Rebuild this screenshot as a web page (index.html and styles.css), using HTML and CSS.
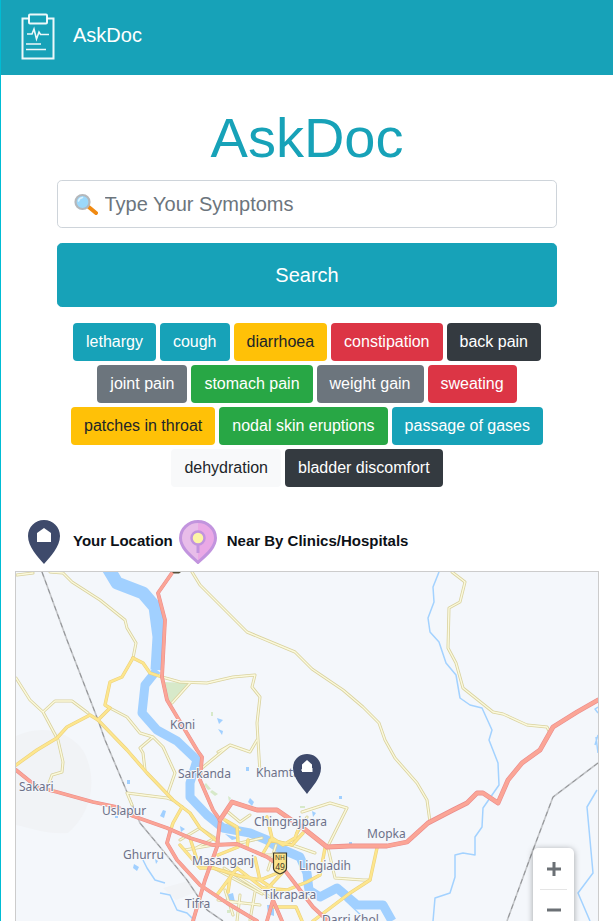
FILE: index.html
```html
<!DOCTYPE html>
<html lang="en">
<head>
<meta charset="utf-8">
<title>AskDoc</title>
<link rel="stylesheet" href="styles.css">
</head>
<body>
<div class="page">
  <nav class="navbar">
    <svg class="brand-icon" viewBox="0 0 34 48" width="34" height="48" aria-hidden="true">
      <path class="brand-stroke" d="M8 5.500H1.500V45.500H32.500V5.500H26"/>
      <rect class="brand-stroke" x="8" y="1.500" width="18" height="9" rx="1"/>
      <path class="brand-stroke thin" d="M6 21H11L13 16L15.500 26L18 19L19.500 21.500H28"/>
      <path class="brand-stroke thin" d="M5 31H20M5 36.500H25"/>
    </svg>
    <span class="brand-name">AskDoc</span>
  </nav>

  <main class="content">
    <h1 class="title">AskDoc</h1>
    <form class="search">
      <div class="search-field">
        <input class="search-input" type="text" placeholder="Type Your Symptoms">
        <svg class="search-emoji" viewBox="0 0 24 24" width="24" height="24" aria-hidden="true">
          <path class="emoji-handle" d="M13.500 14L22 21"/>
          <circle class="emoji-glass" cx="8.500" cy="10" r="7"/>
          <path class="emoji-shine" d="M4.500 9C5 7 6.500 5.800 8.500 5.500"/>
        </svg>
      </div>
      <button class="search-button" type="button">Search</button>
    </form>
    <div class="chips">
      <a class="chip info">lethargy</a>
      <a class="chip info">cough</a>
      <a class="chip warning">diarrhoea</a>
      <a class="chip danger">constipation</a>
      <a class="chip dark">back pain</a>
      <a class="chip secondary">joint pain</a>
      <a class="chip success">stomach pain</a>
      <a class="chip secondary">weight gain</a>
      <a class="chip danger">sweating</a>
      <a class="chip warning">patches in throat</a>
      <a class="chip success">nodal skin eruptions</a>
      <a class="chip info">passage of gases</a>
      <a class="chip light">dehydration</a>
      <a class="chip dark">bladder discomfort</a>
    </div>
  </main>

  <section class="legend">
    <svg class="legend-pin" viewBox="0 0 32 44" width="32" height="44" aria-hidden="true">
      <path class="pin-dark" d="M16 0C7 0 0 7 0 16C0 27 10 37 16 44C22 37 32 27 32 16C32 7 25 0 16 0Z"/>
      <path class="pin-white" d="M9 22V13L16 8L23 13V22Z"/>
    </svg>
    <span class="legend-label first">Your Location</span>
    <svg class="legend-pin" viewBox="0 0 38 44" width="38" height="44" aria-hidden="true">
      <path class="pin-pink-light" d="M19 1.500C9.500 1.500 1.500 9 1.500 18C1.500 28 12 36 19 42.500Z"/>
      <path class="pin-pink" d="M19 1.500C28.500 1.500 36.500 9 36.500 18C36.500 28 26 36 19 42.500Z"/>
      <path class="pin-outline" d="M19 1.500C9.500 1.500 1.500 9 1.500 18C1.500 28 12 36 19 42.500C26 36 36.500 28 36.500 18C36.500 9 28.500 1.500 19 1.500Z"/>
      <path class="pin-stem" d="M19 24V33"/>
      <circle class="pin-bulb" cx="19" cy="18" r="6.500"/>
    </svg>
    <span class="legend-label">Near By Clinics/Hospitals</span>
  </section>

  <section class="map">
    <svg class="map-canvas" viewBox="16 572 582 400" width="582" height="400" aria-hidden="true">
      <defs>
        <path id="m1" d="M17 575L33 573M50 572L63 573L72 582L100 600L125 620L127 628L136 643L133 658"/>
        <path id="m2" d="M192 572L200 585L227 612L247 632L295 652L312 669L343 690L363 707L379 723L385 740L395 758L417 783L427 800L430 822"/>
        <path id="m3" d="M452 572L465 582L460 602L449 608L448 648L456 663L463 688L493 712L503 714L527 725L547 727L550 733"/>
        <path id="m4" d="M162 677L180 682L207 683L233 677L255 675L252 687L260 697L257 723L258 740L260 773M190 683L172 703"/>
        <path id="m5" d="M16 678L30 700L43 712L55 701L72 701L88 713M43 712L58 740L63 762L62 772L52 775L49 783"/>
        <path id="m6" d="M108 707L127 717L140 733L153 737L163 747L175 773L168 793M153 737L140 748L143 753L145 770"/>
        <path id="m7" d="M202 768L230 745L250 752L257 740M127 793L167 798L173 800M127 793L132 805M230 745L218 752"/>
        <path id="m8" d="M180 840L200 828L215 838L196 848M185 850L213 845M228 812L240 822L250 815M227 822L240 830M210 866L262 894M224 868L270 897M218 900L260 905M240 895L237 921M272 855L262 855M225 890L233 915M255 892L250 920M315 853L292 845L270 840M302 812L330 803L347 808L327 848M307 817L297 833M328 848L335 878L363 880L370 880M240 843L262 838M276 845L268 870"/>
        <path id="y1" d="M133 658L122 677L110 682L105 705L110 708L98 720L127 750L147 773L173 800L190 813L200 828L218 842"/>
        <path id="y2" d="M98 720L90 715L67 727L57 738L37 750L16 765M133 658L143 663L150 673L162 677M182 807L173 823L170 832"/>
        <path id="y3" d="M213 868L240 876L260 880L280 872M237 868L217 895M237 868L263 888M230 878L228 892M218 855L238 847M248 840L247 848M225 820L237 827L238 843M255 858L260 880M267 817L272 838L262 855M272 838L283 845L295 838L298 830M270 840L292 845L303 833M260 880L275 890M190 838L197 860M180 845L200 868L213 868"/>
        <path id="y4" d="M325 848L320 875L307 882L287 890M377 848L370 880L350 893L313 921M282 873L268 888M263 888L287 890M274 907L296 907L302 921"/>
        <path id="t1" d="M172 573L158 593L165 620L162 677L167 700L197 750L202 757L200 780L213 810L220 820L217 847L205 880L193 921"/>
        <path id="t2" d="M220 820L232 802L257 810L277 810L303 828L327 847L350 846L387 846L407 842L428 823L453 810L467 803L477 793L483 793L498 803L508 780L522 763L540 750L553 727L577 712L598 700"/>
        <path id="t3" d="M16 770L37 787L57 792L93 802L117 807L133 816L167 828L190 838L213 845L237 844L267 857L283 868L300 890L313 907L328 921"/>
        <path id="t4" d="M170 832L167 843L177 860L200 885L227 903L257 921M273 900L267 921M273 900L282 921"/>
      </defs>

      <rect class="map-bg" x="16" y="572" width="582" height="400"/>
      <path class="land" d="M16 736C40 724 70 730 84 752C98 780 92 812 68 833C50 835 30 828 16 825Z"/>
      <path class="land" d="M163 888L188 881L196 892L176 900Z"/>
      <path class="park" d="M163 682L190 683L170 703L165 697Z"/>
      <path class="park" d="M211 712H213V716H211ZM206 783L211 789L208 790L204 785ZM212 790L218 794L215 796L210 792ZM300 806H305V808H300ZM228 796L231 798L229 802ZM227 910H230V913H227Z"/>

      <path class="stream" d="M439 572L433 587L434 602L428 618L430 632L439 642L446 663L456 675L460 698L470 705L482 708L492 730L489 740L498 763L499 785L483 808L482 827L475 837L475 855L463 853L455 855L455 877L450 893L435 898L433 921"/>
      <path class="stream" d="M596 737L598 753M597 790L587 807L593 873L578 893L590 921M598 707L595 709L598 713M598 735L595 745M143 860L147 868L155 880L165 883M160 893L170 895L177 910L187 913L195 921M345 900L367 921"/>
      <path class="river wide" d="M108 568L117 583L143 593L155 607L159 637L157 670"/>
      <path class="river" d="M157 670L145 685L142 713L157 730L177 741L197 760L190 783L190 797L207 815L223 828L250 833L267 840L277 847L300 857L307 873L309 890L320 897L337 888L357 905L383 905L392 921"/>
      <path class="pond" d="M217 718L223 720L219 724ZM218 729L223 731L222 735ZM127 780H130V784H127ZM163 810L166 811L164 818L160 816ZM180 826L185 829L181 832ZM250 798L254 802L252 806L248 802ZM246 767H249V771H246ZM134 864L139 867L137 871L133 868ZM155 859L158 861L156 864ZM115 816H118V818H115ZM339 796H342V799H339ZM349 842H352V844H349ZM312 811L316 813L313 817ZM226 895L233 893L235 902L227 903ZM267 905H274V916L268 914ZM225 834L240 838L232 840ZM303 880L310 882L309 892L304 888Z"/>

      <g class="rail-base"><path d="M42 572L67 640L98 720L105 740L127 792L140 823L160 847L187 880L207 910L223 921"/><path d="M598 763L553 797L533 850L507 921"/></g>
      <g class="rail-dash"><path d="M42 572L67 640L98 720L105 740L127 792L140 823L160 847L187 880L207 910L223 921"/><path d="M598 763L553 797L533 850L507 921"/></g>

      <g class="casing minor">
        <use href="#m1"/><use href="#m2"/><use href="#m3"/><use href="#m4"/><use href="#m5"/><use href="#m6"/><use href="#m7"/><use href="#m8"/>
      </g>
      <g class="fill minor">
        <use href="#m1"/><use href="#m2"/><use href="#m3"/><use href="#m4"/><use href="#m5"/><use href="#m6"/><use href="#m7"/><use href="#m8"/>
      </g>
      <g class="casing major">
        <use href="#y1"/><use href="#y2"/><use href="#y3"/><use href="#y4"/>
      </g>
      <g class="fill major">
        <use href="#y1"/><use href="#y2"/><use href="#y3"/><use href="#y4"/>
      </g>
      <g class="casing trunk-thin">
        <use href="#t1"/><use href="#t3"/><use href="#t4"/>
      </g>
      <g class="fill trunk-thin">
        <use href="#t1"/><use href="#t3"/><use href="#t4"/>
      </g>
      <g class="casing trunk">
        <use href="#t2"/>
      </g>
      <g class="fill trunk">
        <use href="#t2"/>
      </g>

      <path class="top-tip" d="M172 572H181L179 573.500H174Z"/>

      <g class="map-labels">
        <text x="170" y="729">Koni</text>
        <text x="178" y="778">Sarkanda</text>
        <text x="256" y="777">Khamta</text>
        <text x="19" y="791">Sakari</text>
        <text x="102" y="815">Uslapur</text>
        <text x="123" y="859">Ghurru</text>
        <text x="192" y="865">Masanganj</text>
        <text x="185" y="908">Tifra</text>
        <text x="263" y="899">Tikrapara</text>
        <text x="254" y="826">Chingrajpara</text>
        <text x="299" y="870">Lingiadih</text>
        <text x="367" y="838">Mopka</text>
        <text x="322" y="924">Darri Khol</text>
      </g>

      <g class="shield-group">
        <path class="shield" d="M273.500 853H286.500V868C286.500 871 283 873 280 874C277 873 273.500 871 273.500 868Z"/>
        <text class="shield-top" x="280" y="860" text-anchor="middle">NH</text>
        <text class="shield-num" x="280" y="870" text-anchor="middle">49</text>
      </g>

      <path class="pin-dark" d="M307 754C299 754 293 760 293 768C293 778 302 787 307 794C312 787 321 778 321 768C321 760 315 754 307 754Z"/>
      <path class="pin-white" d="M302 772V764.500L307 760L312 764.500V772Z"/>
      <path class="pin-detail" d="M301 770H306M309 768V772M312 768V772"/>
    </svg>
    <div class="zoom-control">
      <button class="zoom-button" type="button" aria-label="Zoom in">
        <svg viewBox="0 0 16 16" width="16" height="16"><path d="M8 1V15M1 8H15"/></svg>
      </button>
      <button class="zoom-button" type="button" aria-label="Zoom out">
        <svg viewBox="0 0 16 16" width="16" height="16"><path d="M1 8H15"/></svg>
      </button>
    </div>
  </section>
</div>
</body>
</html>
```
FILE: styles.css
```css
* { box-sizing: border-box; }
html, body { margin: 0; padding: 0; background: #fff; }
body {
  font-family: "Liberation Sans", Arial, sans-serif;
  font-size: 16px;
  line-height: 1.5;
  color: #212529;
}
.page {
  height: 100vh;
  overflow: hidden;
  border-left: 1px solid #00bcd4;
}
.navbar {
  height: 75px;
  background: #17a2b8;
  display: flex;
  align-items: center;
  padding-left: 20px;
}
.brand-icon { flex: none; margin-right: 18px; margin-top: -1px; }
.brand-stroke { fill: none; stroke: #fff; stroke-width: 2; opacity: .92; }
.brand-stroke.thin { stroke-width: 1.6; }
.brand-name { color: #fff; font-size: 20px; line-height: 30px; margin-top: -6px; }

.content { width: 500px; margin: 0 auto; }
.title {
  margin: 29px 0 9px;
  text-align: center;
  font-size: 56px;
  font-weight: 400;
  line-height: 67px;
  color: #17a2b8;
}
.search { display: block; }
.search-field { position: relative; }
.search-input {
  display: block;
  width: 100%;
  height: 48px;
  padding: 8px 16px 8px 46.500px;
  font: 20px/1.5 "Liberation Sans", Arial, sans-serif;
  color: #495057;
  background: #fff;
  border: 1px solid #ced4da;
  border-radius: 4.8px;
  outline: none;
}
.search-input::placeholder { color: #6c757d; opacity: 1; }
.search-emoji { position: absolute; left: 17px; top: 12px; pointer-events: none; }
.emoji-handle { fill: none; stroke: #f08a12; stroke-width: 4; stroke-linecap: round; }
.emoji-glass { fill: #9bd8fb; stroke: #b4b8bc; stroke-width: 2.2; }
.emoji-shine { fill: none; stroke: #d9f2ff; stroke-width: 1.6; stroke-linecap: round; }
.search-button {
  display: block;
  width: 100%;
  height: 64px;
  margin-top: 15px;
  border: 1px solid #17a2b8;
  border-radius: 4.8px;
  background: #17a2b8;
  color: #fff;
  font: 20px/1.5 "Liberation Sans", Arial, sans-serif;
}
.chips {
  display: flex;
  flex-wrap: wrap;
  justify-content: center;
  gap: 4px;
  margin-top: 16px;
}
.chip {
  display: block;
  padding: 6px 12px;
  border: 1px solid transparent;
  border-radius: 4px;
  font-size: 16px;
  line-height: 24px;
  color: #fff;
}
.info { background: #17a2b8; }
.warning { background: #ffc107; color: #212529; }
.danger { background: #dc3545; }
.dark { background: #343a40; }
.secondary { background: #6c757d; }
.success { background: #28a745; }
.light { background: #f8f9fa; color: #212529; }

.legend {
  display: flex;
  align-items: center;
  height: 44px;
  margin-top: 33px;
  padding-left: 27px;
}
.legend-pin { flex: none; }
.legend-label {
  margin-left: 13px;
  margin-bottom: 2px;
  font-size: 15px;
  font-weight: 700;
  color: #0d1117;
  white-space: nowrap;
}
.legend-label.first { margin-right: 6px; }
.legend-label:last-child { margin-left: 10px; }
.pin-dark { fill: #3e4a6b; }
.pin-white { fill: #fff; }
.pin-pink-light { fill: #e8bde9; }
.pin-pink { fill: #eaa9e6; }
.pin-outline { fill: none; stroke: #c294de; stroke-width: 3; }
.pin-stem { fill: none; stroke: #c294de; stroke-width: 3; }
.pin-bulb { fill: #fdf5a6; stroke: #c294de; stroke-width: 2.5; }
.pin-detail { fill: none; stroke: #fff; stroke-width: 1; }

.map {
  position: relative;
  height: 400px;
  margin: 7px 14px 0;
  border: 1px solid #ccc;
  overflow: hidden;
}
.map-canvas { display: block; }
.map-bg { fill: #f4f7fb; }
.land { fill: #f1f3f6; }
.park { fill: #d7e9c9; }
.stream { fill: none; stroke: #a3d2ff; stroke-width: 1.5; stroke-linejoin: round; }
.river { fill: none; stroke: #a1d0ff; stroke-width: 9; stroke-linejoin: round; }
.river.wide { stroke-width: 13; }
.pond { fill: #a1d0ff; }
.rail-base path { fill: none; stroke: #c2c4c7; stroke-width: 1.6; }
.rail-dash path { fill: none; stroke: #909295; stroke-width: 1; stroke-dasharray: 5 4; }
.casing, .fill { fill: none; stroke-linejoin: round; stroke-linecap: round; }
.casing.minor { stroke: #d9d29f; stroke-width: 3; }
.fill.minor { stroke: #fbf9dc; stroke-width: 1.4; }
.casing.major { stroke: #ecd27c; stroke-width: 3.4; }
.fill.major { stroke: #fde68e; stroke-width: 2.2; }
.casing.trunk { stroke: #ea8c8c; stroke-width: 4.8; }
.fill.trunk { stroke: #fba596; stroke-width: 3.6; }
.casing.trunk-thin { stroke: #ea8c8c; stroke-width: 3.8; }
.fill.trunk-thin { stroke: #fba596; stroke-width: 2.8; }
.top-tip { fill: #55503a; }
.map-labels text {
  font-family: "Noto Sans", sans-serif;
  font-size: 12px;
  fill: #6d7189;
  stroke: #f4f7fb;
  stroke-width: 2;
  paint-order: stroke;
}
.shield { fill: #fbe38a; stroke: #3c3a2c; stroke-width: 1.2; }
.shield-top { font-family: "Noto Sans", sans-serif; font-size: 6.5px; fill: #3c3a2c; }
.shield-num { font-family: "Noto Sans", sans-serif; font-size: 8.5px; fill: #3c3a2c; }

.zoom-control {
  position: absolute;
  top: 276px;
  right: 24px;
  width: 41px;
  display: flex;
  flex-direction: column;
  padding: 0 7px;
  background: #fff;
  border-radius: 5px;
  box-shadow: 0 1px 6px rgba(0, 0, 0, .35);
}
.zoom-button {
  display: flex;
  align-items: center;
  justify-content: center;
  width: 100%;
  height: 41px;
  padding: 0;
  border: 0;
  background: none;
}
.zoom-button + .zoom-button { border-top: 1px solid #e5e5e5; }
.zoom-button path { fill: none; stroke: #6b7075; stroke-width: 3; }
```
